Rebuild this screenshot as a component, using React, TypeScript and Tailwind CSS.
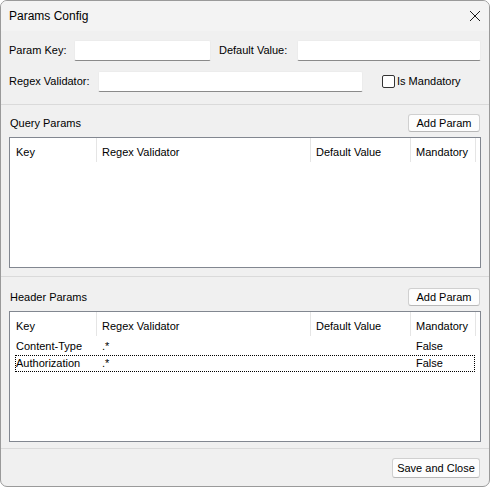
import React from "react";

const FONT = { fontFamily: '"Segoe UI", "Liberation Sans", Arial, sans-serif' };

const COLS = [
  { label: "Key", w: "w-[86px]" },
  { label: "Regex Validator", w: "w-[214px]" },
  { label: "Default Value", w: "w-[100px]" },
  { label: "Mandatory", w: "w-[65px]" },
];

type Row = { key: string; regex: string; def: string; mandatory: string };

const HEADER_ROWS: Row[] = [
  { key: "Content-Type", regex: ".*", def: "", mandatory: "False" },
  { key: "Authorization", regex: ".*", def: "", mandatory: "False" },
];

function WinButton({ children, className = "" }: { children: React.ReactNode; className?: string }) {
  return (
    <button
      type="button"
      className={`h-[18px] rounded-[3px] border border-[#d0d0d0] border-b-[#b8b8b8] bg-[#fdfdfd] text-[11px] leading-none text-black ${className}`}
    >
      {children}
    </button>
  );
}

function TextBox({ className = "" }: { className?: string }) {
  return (
    <div
      className={`h-[21px] rounded-[2px] border border-[#ececec] border-b-[#8a8a8a] bg-white ${className}`}
    />
  );
}

function ParamTable({ rows }: { rows: Row[] }) {
  return (
    <div className="mx-[8px] h-[131px] border border-[#828790] bg-white pl-[1px]">
      <div className="flex h-[26px] items-start">
        {COLS.map((c) => (
          <div
            key={c.label}
            className={`${c.w} flex h-[24px] shrink-0 items-center border-r border-[#e5e5e5] pt-[4px] pl-[5px] text-[11px]`}
          >
            {c.label}
          </div>
        ))}
      </div>
      {rows.map((r, i) => (
        <div
          key={r.key}
          className={`ml-[4px] flex h-[17px] w-[460px] items-center text-[11px] ${
            i === rows.length - 1 ? "outline-1 outline-dotted -outline-offset-1 outline-black" : ""
          }`}
        >
          <div className="w-[82px] shrink-0 pl-[1px]">{r.key}</div>
          <div className="w-[214px] shrink-0 pl-[5px]">{r.regex}</div>
          <div className="w-[100px] shrink-0 pl-[5px]">{r.def}</div>
          <div className="w-[60px] shrink-0 pl-[5px]">{r.mandatory}</div>
        </div>
      ))}
    </div>
  );
}

export default function App() {
  return (
    <div
      className="flex h-[487px] w-[490px] flex-col overflow-hidden rounded-[7px] border border-[#9a9a9a] bg-[#f0f0f0] text-black"
      style={FONT}
    >
      {/* ── Title bar ── */}
      <div className="flex h-[30px] shrink-0 items-center justify-between bg-[#f3f3f3] pl-[8px] pr-[8px]">
        <span className="text-[12px]">Params Config</span>
        <svg width="12" height="12" viewBox="0 0 12 12" fill="none">
          <path d="M1 1l10 10M11 1L1 11" stroke="#1a1a1a" strokeWidth="1" />
        </svg>
      </div>

      {/* ── Param form ── */}
      <div className="flex flex-col gap-[10px] px-[8px] pt-[9px] pb-[12px]">
        <div className="flex items-center">
          <span className="w-[65px] text-[11px]">Param Key:</span>
          <TextBox className="w-[137px]" />
          <span className="ml-[8px] w-[78px] text-[11px]">Default Value:</span>
          <TextBox className="w-[184px]" />
        </div>
        <div className="flex items-center">
          <span className="w-[89px] text-[11px]">Regex Validator:</span>
          <TextBox className="w-[265px]" />
          <label className="ml-[19px] flex items-center gap-[2px] text-[11px]">
            <span className="h-[13px] w-[13px] rounded-[2px] border border-[#333] bg-white" />
            Is Mandatory
          </label>
        </div>
      </div>

      <div className="border-t border-[#dadada]" />

      {/* ── Query Params ── */}
      <div className="flex items-center justify-between px-[9px] pt-[9px] pb-[5px]">
        <span className="text-[11px]">Query Params</span>
        <WinButton className="w-[72px]">Add Param</WinButton>
      </div>
      <ParamTable rows={[]} />

      <div className="mt-[8px] border-t border-[#dadada]" />

      {/* ── Header Params ── */}
      <div className="flex items-center justify-between px-[9px] pt-[11px] pb-[5px]">
        <span className="text-[11px]">Header Params</span>
        <WinButton className="w-[72px]">Add Param</WinButton>
      </div>
      <ParamTable rows={HEADER_ROWS} />

      <div className="mt-[6px] border-t border-[#dadada]" />

      {/* ── Footer ── */}
      <div className="flex justify-end px-[9px] pt-[9px]">
        <WinButton className="h-[20px] w-[88px]">Save and Close</WinButton>
      </div>
    </div>
  );
}
